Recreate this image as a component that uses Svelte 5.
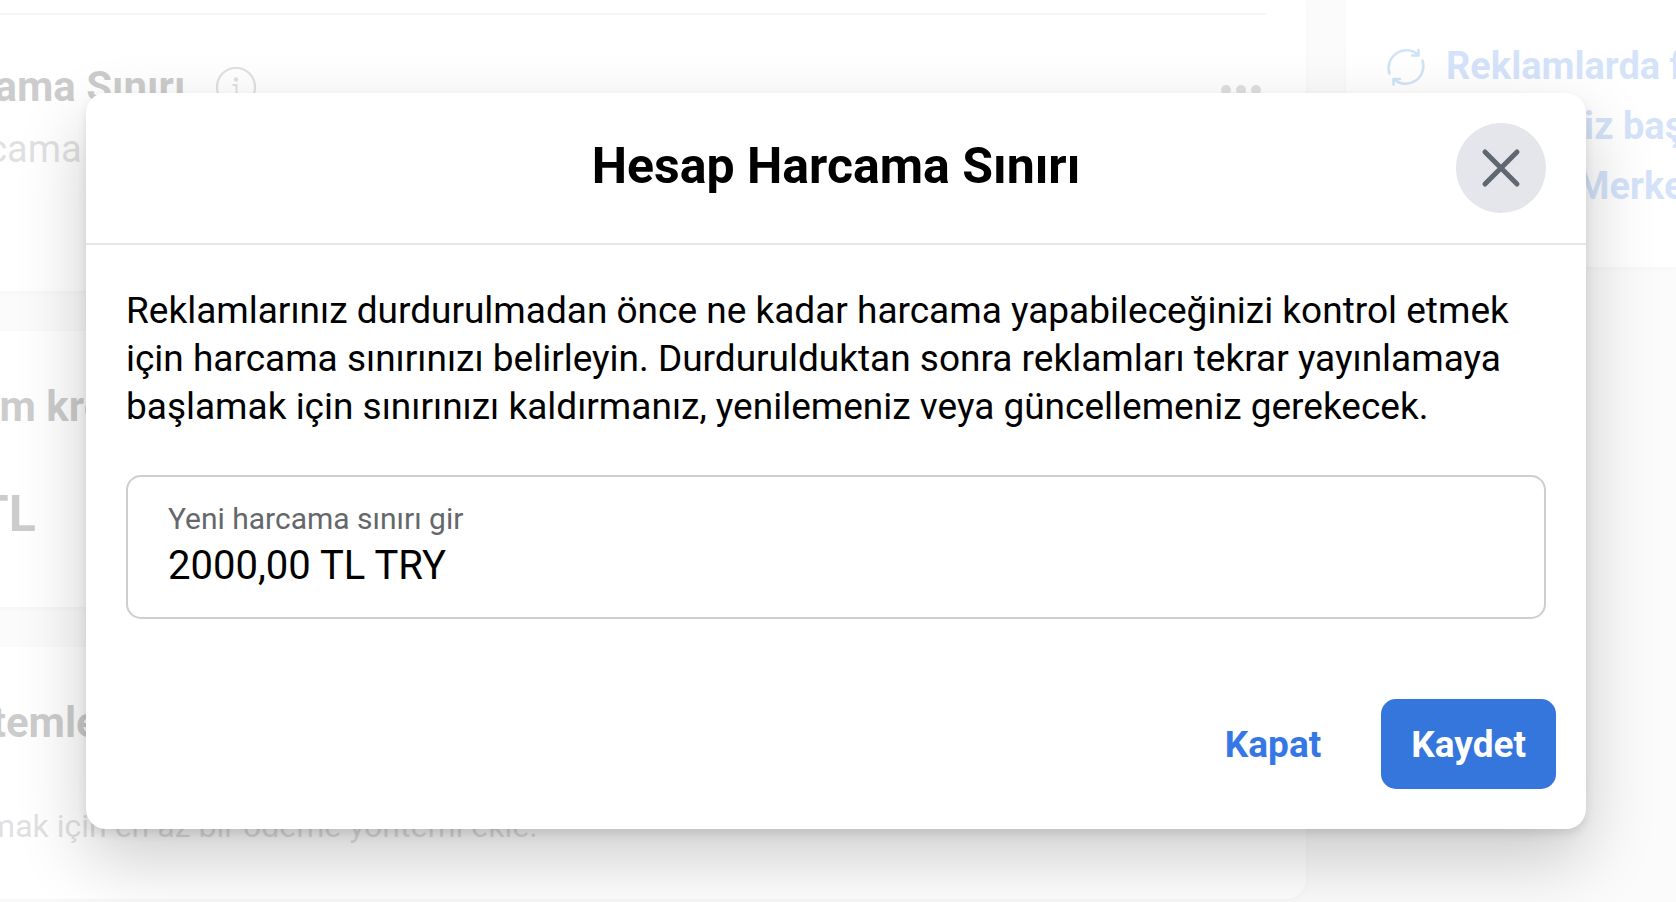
<script>
  let limit = $state('2000,00 TL TRY');
</script>

<div class="page">
  <main class="column">
    <section class="card limit-card">
      <div class="limit-row">
        <div>
          <h2>Hesap Harcama Sınırı
            <svg class="info" viewBox="0 0 40 40" aria-hidden="true">
              <circle cx="20" cy="20" r="19" fill="none" stroke="currentColor" stroke-width="2.2" />
              <circle cx="20" cy="12.500" r="2.2" fill="currentColor" />
              <path d="M16.500 18H20.500V29M16 29.500H25" fill="none" stroke="currentColor" stroke-width="2" />
            </svg>
          </h2>
          <p class="sub">Hesabını harcama</p>
        </div>
        <svg class="dots" viewBox="0 0 40 10" aria-hidden="true">
          <circle cx="5" cy="5" r="5" /><circle cx="20" cy="5" r="5" /><circle cx="35" cy="5" r="5" />
        </svg>
      </div>
    </section>
    <section class="card credit-card">
      <h2>Alınan reklam kredisi</h2>
      <p class="amount">Bakiye 0 TL</p>
    </section>
    <section class="card methods-card">
      <h2>Ödeme Yöntemleri</h2>
      <p class="note">Reklam yayınlamak için en az bir ödeme yöntemi ekle.</p>
    </section>
  </main>
  <aside class="card help-card">
    <svg class="refresh" viewBox="0 0 40 40" fill="none" stroke="currentColor" stroke-width="2.6" stroke-linecap="round" stroke-linejoin="round" aria-hidden="true">
      <path d="M3.500 26.500A17.800 17.800 0 0 1 32 7.500M32.500 3V8.500H26M36.500 13.500A17.800 17.800 0 0 1 8 32.500M7.500 37.500V32H14" />
    </svg>
    <a href="#help">Reklamlarda fatura<br />ödemeniz başarı<br />Yardım Merkezi</a>
  </aside>
</div>

<div class="overlay">
  <div class="dialog" role="dialog" aria-modal="true" aria-labelledby="dialog-title">
    <header>
      <h1 id="dialog-title">Hesap Harcama Sınırı</h1>
      <button class="close" type="button" aria-label="Kapat">
        <svg viewBox="0 0 40 40" aria-hidden="true"><path d="M4 4L36 36M36 4L4 36" /></svg>
      </button>
    </header>
    <div class="body">
      <p>Reklamlarınız durdurulmadan önce ne kadar harcama yapabileceğinizi kontrol etmek için harcama sınırınızı belirleyin. Durdurulduktan sonra reklamları tekrar yayınlamaya başlamak için sınırınızı kaldırmanız, yenilemeniz veya güncellemeniz gerekecek.</p>
      <div class="field">
        <label for="limit">Yeni harcama sınırı gir</label>
        <input id="limit" type="text" bind:value={limit} />
      </div>
    </div>
    <footer>
      <button class="btn" type="button">Kapat</button>
      <button class="btn primary" type="button">Kaydet</button>
    </footer>
  </div>
</div>

<style>
  :global(body) { font-family: Roboto, "Liberation Sans", sans-serif; color: #000; overflow: hidden; }
  h1, h2, p { margin: 0; }
  * { box-sizing: border-box; }

  .page {
    display: grid;
    grid-template-columns: minmax(0, 1fr) 330px;
    align-items: start;
    gap: 40px;
    height: 100vh;
    overflow: hidden;
    background: #ebebec;
  }
  .column { display: flex; flex-direction: column; gap: 40px; margin-left: -265px; }
  .card { background: #fff; border-radius: 20px; padding: 0 40px; box-shadow: 0 2px 5px rgba(0, 0, 0, 0.12); }
  .limit-card { padding-top: 13px; height: 291px; border-radius: 0 0 20px 20px; }
  .credit-card { padding-top: 51px; height: 276px; }
  .methods-card { padding-top: 51px; height: 252px; }
  .limit-row { display: flex; justify-content: space-between; border-top: 2px solid #d0d2d6; padding-top: 47px; }
  h2 { display: flex; align-items: center; gap: 31px; font-size: 42px; line-height: 50px; font-weight: 700; }
  .info { width: 40px; height: 40px; color: #65676b; }
  .sub { font-size: 38px; line-height: 50px; margin-top: 12px; color: #65676b; }
  .dots { width: 40px; height: 10px; margin: 23px 5px 0 0; fill: #65676b; }
  .amount { font-size: 50px; line-height: 60px; font-weight: 700; margin-top: 52px; }
  .note { font-size: 32px; line-height: 40px; margin-top: 58px; color: #65676b; }

  .help-card { display: flex; gap: 20px; padding-top: 36px; height: 267px; border-radius: 0 0 0 20px; white-space: nowrap; }
  .refresh { flex: none; width: 40px; height: 40px; margin-top: 11px; color: #1877d2; }
  a { font-size: 38px; line-height: 60px; font-weight: 700; color: #2c72e5; text-decoration: none; }

  .overlay { position: absolute; inset: 0; padding: 93px 90px 72px 86px; background: rgba(255, 255, 255, 0.8); }
  .dialog { background: #fff; border-radius: 20px; box-shadow: 0 30px 70px rgba(0, 0, 0, 0.2), 0 5px 10px rgba(0, 0, 0, 0.1); }
  header { display: grid; grid-template-columns: 90px 1fr 90px; align-items: center; padding: 30px 40px; border-bottom: 2px solid #e5e5e5; }
  h1 { grid-column: 2; text-align: center; font-size: 50px; line-height: 60px; font-weight: 700; padding-bottom: 4px; }
  button { font: inherit; border: 0; cursor: pointer; }
  .close { display: grid; place-items: center; width: 90px; height: 90px; padding: 0; border-radius: 50%; background: #e4e6eb; }
  .close svg { width: 40px; height: 40px; fill: none; stroke: #606770; stroke-width: 5; stroke-linecap: round; }
  .body { padding: 42px 40px 0; }
  .body p { font-size: 37px; line-height: 48px; }
  .field { display: flex; flex-direction: column; margin-top: 44px; padding: 24px 40px 22px; border: 2px solid #ccced2; border-radius: 15px; }
  label { font-size: 30px; line-height: 36px; color: #65676b; }
  input { font: inherit; font-size: 40px; line-height: 58px; height: 58px; padding: 0; border: 0; outline: 0; width: 100%; background: none; color: #000; }
  footer { display: flex; justify-content: flex-end; gap: 30px; padding: 80px 30px 40px; }
  .btn { height: 90px; padding: 0 30px; border-radius: 15px; background: none; color: #3578e5; font-size: 37px; font-weight: 700; }
  .primary { background: #3576dc; color: #fff; }
</style>
